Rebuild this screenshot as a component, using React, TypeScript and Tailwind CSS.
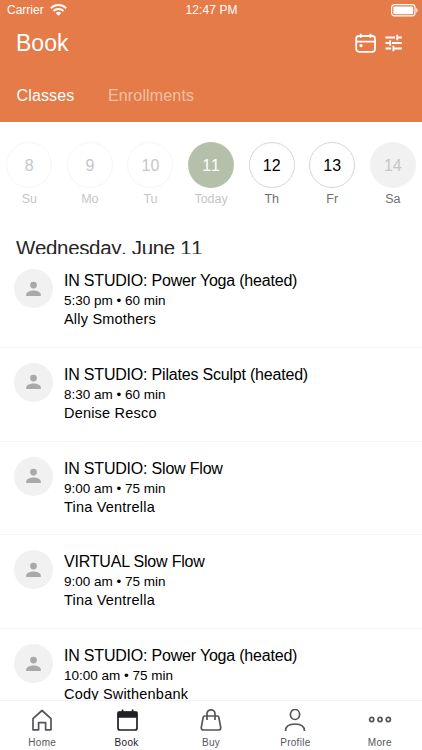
import React from 'react';

interface Day {
  date: number;
  label: string;
  circle: string;
  text: string;
}

interface StudioClass {
  title: string;
  time: string;
  teacher: string;
}

const days: Day[] = [
  { date: 8, label: 'Su', circle: 'border border-[#f6f6f6] text-[#c6c6c6]', text: 'text-[#c6c6c6]' },
  { date: 9, label: 'Mo', circle: 'border border-[#f6f6f6] text-[#c6c6c6]', text: 'text-[#c6c6c6]' },
  { date: 10, label: 'Tu', circle: 'border border-[#f6f6f6] text-[#c6c6c6]', text: 'text-[#c6c6c6]' },
  { date: 11, label: 'Today', circle: 'bg-[#b5c0aa] text-white', text: 'text-[#c6c6c6]' },
  { date: 12, label: 'Th', circle: 'border border-[#d6d6d6] text-black', text: 'text-[#707070]' },
  { date: 13, label: 'Fr', circle: 'border border-[#d6d6d6] text-black', text: 'text-[#707070]' },
  { date: 14, label: 'Sa', circle: 'bg-[#f1f1f1] text-[#c6c6c6]', text: 'text-[#707070]' },
];

const classes: StudioClass[] = [
  { title: 'IN STUDIO: Power Yoga (heated)', time: '5:30 pm • 60 min', teacher: 'Ally Smothers' },
  { title: 'IN STUDIO: Pilates Sculpt (heated)', time: '8:30 am • 60 min', teacher: 'Denise Resco' },
  { title: 'IN STUDIO: Slow Flow', time: '9:00 am • 75 min', teacher: 'Tina Ventrella' },
  { title: 'VIRTUAL Slow Flow', time: '9:00 am • 75 min', teacher: 'Tina Ventrella' },
  { title: 'IN STUDIO: Power Yoga (heated)', time: '10:00 am • 75 min', teacher: 'Cody Swithenbank' },
];

function StatusBar() {
  return (
    <div className="flex h-5 items-center pl-[7px] pr-[4px] text-[12px] leading-5">
      <div className="flex flex-1 items-center gap-[6px]">
        <span>Carrier</span>
        <svg width="17" height="12" viewBox="0 0 17 12" fill="none" stroke="currentColor" strokeWidth="1.9">
          <path d="M.8 4.2a11 11 0 0 1 15.4 0M3.5 7a7.1 7.1 0 0 1 10 0" />
          <path d="M8.5 11.8 5.8 9.1a3.9 3.9 0 0 1 5.4 0Z" fill="currentColor" stroke="none" />
        </svg>
      </div>
      <span className="mr-[2px] tracking-[0.1px]">12:47 PM</span>
      <div className="flex flex-1 justify-end">
        <svg width="28" height="13" viewBox="0 0 28 13" fill="none">
          <rect x="1.6" y=".7" width="23.4" height="11.2" rx="2.8" stroke="currentColor" strokeWidth="1.2" />
          <rect x="3.4" y="2.4" width="19.8" height="7.8" rx="1.2" fill="currentColor" />
          <path d="M26.2 4.2c1.8.5 1.8 3.7 0 4.2Z" fill="currentColor" />
        </svg>
      </div>
    </div>
  );
}

function Header() {
  return (
    <header className="h-[122px] shrink-0 bg-[#e47b48] text-white">
      <StatusBar />
      <div className="flex h-[45px] items-center justify-between pl-[16px] pr-[19px]">
        <h1 className="text-[23px] leading-7">Book</h1>
        <div className="flex items-center gap-[9px]">
          <svg width="22" height="20" viewBox="0 0 22 20" fill="none" stroke="currentColor" strokeWidth="1.8">
            <rect x="2.2" y="3" width="18.8" height="15.8" rx="2.8" />
            <path d="M2.2 8.6H21M6.7 .8v4M16.5 .8v4" />
            <circle cx="7" cy="12.6" r="1.6" fill="currentColor" stroke="none" />
          </svg>
          <svg width="18" height="18" viewBox="0 0 18 18" fill="none" stroke="currentColor" strokeWidth="1.8">
            <path d="M.5 3.5h9.6M12.2 3.5h4.6M12.2 .8v5.4M.5 9h4M7 9h9.8M5.2 6.3v5.4M.5 14.5h5.6M8.5 14.5h8.3M8.4 11.8v5.4" />
          </svg>
        </div>
      </div>
      <nav className="flex h-[57px] items-center pl-[16.5px] pt-[5px] text-[16px]">
        <span className="w-[91.5px] tracking-[0.15px]">Classes</span>
        <span className="tracking-[0.15px] text-[#f4c0a5]">Enrollments</span>
      </nav>
    </header>
  );
}

function DayPicker() {
  return (
    <div className="flex shrink-0 pt-[19.5px]">
      {days.map((day) => (
        <div key={day.date} className="flex w-[60.6px] shrink-0 flex-col items-center first:ml-[-1px]">
          <div className={`flex size-[46px] items-center justify-center rounded-full pt-[2px] text-[16px] [font-kerning:none] ${day.circle}`}>
            {day.date}
          </div>
          <span className={`mt-[3px] text-[12.5px] leading-4 ${day.text}`}>{day.label}</span>
        </div>
      ))}
    </div>
  );
}

function Avatar() {
  return (
    <div className="flex size-[39px] shrink-0 items-center justify-center rounded-full bg-[#f1f1f1] text-[#a9a9a9]">
      <svg width="15" height="16" viewBox="0 0 15 16" fill="currentColor">
        <circle cx="7.5" cy="4.1" r="3.4" />
        <path d="M.2 15v-1.4c0-3 4.7-4.1 7.3-4.1s7.3 1.1 7.3 4.1V15Z" />
      </svg>
    </div>
  );
}

function ClassRow({ item }: { item: StudioClass }) {
  return (
    <li className="flex h-[93.75px] border-b border-[#f5f5f5] pl-[13.5px] pt-[15px]">
      <Avatar />
      <div className="ml-[11.5px] whitespace-nowrap text-black">
        <p className="text-[16px] leading-[23px] tracking-[-0.2px]">{item.title}</p>
        <p className="text-[13.5px] leading-[17px]">{item.time}</p>
        <p className="text-[14.5px] leading-[20px] tracking-[0.2px]">{item.teacher}</p>
      </div>
    </li>
  );
}

function TabBar() {
  return (
    <nav className="grid h-[50px] shrink-0 grid-cols-5 border-t border-[#f3f3f3] bg-white text-[10px] text-[#54555b]">
      <div className="flex flex-col items-center pt-[8px]">
        <svg width="22" height="23" viewBox="0 0 22 23" fill="none" stroke="currentColor" strokeWidth="1.7" strokeLinejoin="round">
          <path d="M2 9.7 11 1.5l9 8.2v11.1h-5.4v-7.2H7.6v7.2H2Z" />
        </svg>
        <span className="mt-[5px] leading-3 tracking-[0.3px]">Home</span>
      </div>
      <div className="flex flex-col items-center pt-[8px] text-[#202126]">
        <svg width="22" height="23" viewBox="0 0 22 23" fill="none" stroke="currentColor" strokeWidth="1.7">
          <rect x="2" y="3.2" width="19" height="17.8" rx="2" />
          <path d="M2.4 3.4h18.2v4.6H2.4Z" fill="currentColor" />
          <path d="M6.6 .4v4M16.6 .4v4" />
        </svg>
        <span className="mt-[5px] leading-3 tracking-[0.3px]">Book</span>
      </div>
      <div className="flex flex-col items-center pt-[8px]">
        <svg width="22" height="23" viewBox="0 0 22 23" fill="none" stroke="currentColor" strokeWidth="1.7">
          <path d="M4.6 7h12.8q1.2 0 1.4 1.2l1.9 10.2q.3 2.6-2.3 2.6H3.6q-2.6 0-2.3-2.6L3.2 8.2Q3.4 7 4.6 7Z" strokeLinejoin="round" />
          <path d="M7 11V4.8a4 4 0 0 1 8 0V11" />
        </svg>
        <span className="mt-[5px] leading-3 tracking-[0.3px]">Buy</span>
      </div>
      <div className="flex flex-col items-center pt-[8px]">
        <svg width="22" height="23" viewBox="0 0 22 23" fill="none" stroke="currentColor" strokeWidth="1.7">
          <ellipse cx="11" cy="5.5" rx="4.6" ry="5" />
          <path d="M1.5 22c0-4.6 3.5-7 9.5-7s9.5 2.4 9.5 7" />
        </svg>
        <span className="mt-[5px] leading-3 tracking-[0.3px]">Profile</span>
      </div>
      <div className="flex flex-col items-center pt-[8px]">
        <svg width="24" height="23" viewBox="0 0 24 23" fill="none" stroke="currentColor" strokeWidth="1.7">
          <circle cx="3.7" cy="10.5" r="2.1" />
          <circle cx="12" cy="10.5" r="2.1" />
          <circle cx="20.3" cy="10.5" r="2.1" />
        </svg>
        <span className="mt-[5px] leading-3 tracking-[0.3px]">More</span>
      </div>
    </nav>
  );
}

export default function App() {
  return (
    <div className="flex h-[750px] w-[422px] flex-col overflow-hidden bg-white font-['Liberation_Sans',Arial,sans-serif]">
      <Header />
      <DayPicker />
      <h2 className="mt-[27.5px] h-[20px] shrink-0 overflow-hidden pl-[16px] text-[20.5px] leading-[27px] tracking-[-0.35px] text-[#262626] [font-kerning:none]">
        Wednesday, June 11
      </h2>
      <ul className="min-h-0 flex-1 overflow-hidden">
        {classes.map((item, index) => (
          <ClassRow key={index} item={item} />
        ))}
      </ul>
      <TabBar />
    </div>
  );
}
